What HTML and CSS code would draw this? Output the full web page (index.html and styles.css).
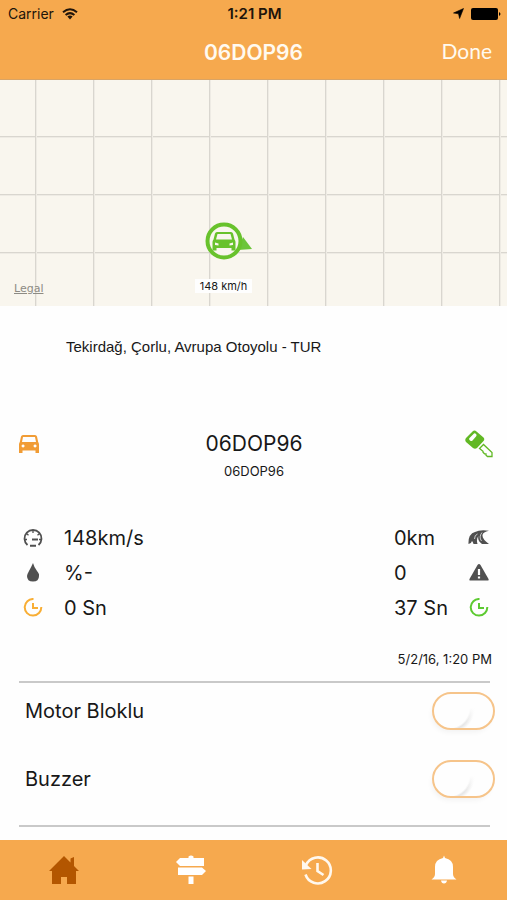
FILE: index.html
```html
<!DOCTYPE html>
<html lang="tr">
<head>
<meta charset="utf-8">
<meta name="viewport" content="width=device-width, initial-scale=1">
<title>06DOP96</title>
<link rel="stylesheet" href="styles.css">
</head>
<body>
<div class="app">
  <header class="header">
    <div class="status">
      <div class="carrier">Carrier
        <svg width="16" height="12" viewBox="0 0 16 12" fill="none" stroke="#20140a" stroke-width="2"><path d="M1 4.2Q8-1.8 15 4.2M3.6 7Q8 3.2 12.4 7"/><path d="M5.4 8.6Q8 6.6 10.6 8.6L8 11.6Z" fill="#20140a" stroke="none"/></svg>
      </div>
      <div class="clock">1:21 PM</div>
      <div class="power">
        <svg width="11" height="11" viewBox="0 0 11 11"><path d="M10.500.5 6.600 10.500 5.500 5.800.5 5Z" fill="#000" stroke="#000" stroke-width=".6"/></svg>
        <svg width="30" height="12" viewBox="0 0 30 12"><rect width="27" height="12" rx="2"/><path d="M28 4q3 2 0 4z"/></svg>
      </div>
    </div>
    <div class="nav">
      <h1 class="nav-title">06DOP96</h1>
      <button class="done" type="button">Done</button>
    </div>
  </header>

  <section class="map" aria-label="Map">
    <a class="legal" href="#legal">Legal</a>
    <div class="marker">
      <svg width="50" height="40" viewBox="0 0 50 40">
        <path d="M39 16 48 28 34 29Z" fill="#6cc53a"/>
        <circle cx="20" cy="20" r="16.500" fill="#f9f6ee" stroke="#68c22c" stroke-width="4"/>
        <path transform="translate(-1)" fill="#68c22c" fill-rule="evenodd" d="M14 11h14q1.500 0 2 1.500l1.500 6q1 1 1 2.500v8.500h-4V27h-15v2.500h-4V21q0-1.500 1-2.500l1.500-6Q12.500 11 14 11zM14.500 13 13 18.500h16L27.500 13zM12 21.500v2.500l3.500.5v-2zM30 21.500v2.500l-3.500.5v-2z"/>
      </svg>
      <span class="speed-tag">148 km/h</span>
    </div>
  </section>

  <main class="details">
    <p class="address">Tekirdağ, Çorlu, Avrupa Otoyolu - TUR</p>

    <section class="vehicle">
      <svg class="car" width="20" height="18" viewBox="0 0 20 18"><path fill="#f19c35" fill-rule="evenodd" d="M4 0h12q1.500 0 2 1.500L19.200 7Q20 8 20 9.500V18h-3.500v-2.500h-13V18H0V9.500Q0 8 .8 7L2 1.500Q2.500 0 4 0zM4 2 3 7h14l-1-5zM4 9.500a1.500 1.500 0 1 0 .1 0zM16 9.500a1.500 1.500 0 1 0 .1 0z"/></svg>
      <div class="names">
        <h2 class="plate">06DOP96</h2>
        <p class="alias">06DOP96</p>
      </div>
      <svg class="key" width="28" height="28" viewBox="0 0 28 28"><path fill="#61b824" fill-rule="evenodd" d="M7.500 1.500q2-2 4 0l7 6q1.500 1.500 0 3.500l-6.500 7q-2 1.500-4 0l-7-6q-1.500-2 0-4zM9 3.500 4.500 8q-1 1.500.5 2.500t2.500 0L11 6.500Q12 5 11 4t-2-.5z"/><path d="M14.500 18.500 18.500 14.500 27 22.500V26.500H22.500L21 25.200V23.800H19.500L18 22.300V21.200Z" fill="#fff" stroke="#61b824" stroke-width="1.300"/></svg>
    </section>

    <section class="stats">
      <svg width="20" height="18" viewBox="0 0 20 18" fill="none" stroke="#505050" stroke-width="2"><path d="M4.500 16A8.500 8.500 0 1 1 15.500 16" stroke-width="1.800"/><path d="M10 1v3M3.500 4.500l2 1.800M16.500 4.500l-2 1.800M1 10.500h3M19 10.500h-3" stroke-width="1.300"/><path d="M9 10.500h6M7 16.700h6"/></svg>
      <span class="value">148km/s</span>
      <span class="value">0km</span>
      <svg width="22" height="16" viewBox="0 0 22 16"><path fill="#505050" d="M.5 14Q0 4 7 2 12-.5 21 .8 15 2 14.500 5q-.5 4 6.500 9H14Q9 10.500 10.500 6 8 9 9.500 14H5.500Q5 12 4 11 3.500 13.500.5 14Z"/><path d="M6.500 9q0-4 3-5M14 2.500Q10.500 7 13.500 11" fill="none" stroke="#fff" stroke-width=".7"/></svg>

      <svg width="12" height="19" viewBox="0 0 12 19"><path fill="#505050" d="M6 0Q7 4 10 8t2 5q0 5.500-6 5.500T0 13q0-1.500 2-5T6 0z"/></svg>
      <span class="value">%-</span>
      <span class="value">0</span>
      <svg width="20" height="17" viewBox="0 0 20 17"><path fill="#505050" d="M8.500 1q1.500-2 3 0l8 14q.5 1.500-1 1.500h-17q-1.500 0-1-1.500z"/><path d="M10 5v6M10 12.500v2" stroke="#fff" stroke-width="2.200"/></svg>

      <svg width="20" height="19" viewBox="0 0 20 19" fill="none" stroke="#f8ae35" stroke-width="2"><path d="M10.500 1A8.300 8.300 0 1 0 18.300 9M10 5v5h5"/></svg>
      <span class="value">0 Sn</span>
      <span class="value">37 Sn</span>
      <svg width="20" height="19" viewBox="0 0 20 19" fill="none" stroke="#5dca31" stroke-width="2"><path d="M10.500 1A8.300 8.300 0 1 0 18.300 9M10 5v5h5"/></svg>
    </section>

    <time class="date">5/2/16, 1:20 PM</time>

    <section class="switches">
      <div class="switch-row">
        <label for="motor">Motor Bloklu</label>
        <input class="switch" id="motor" type="checkbox" role="switch">
      </div>
      <div class="switch-row">
        <label for="buzzer">Buzzer</label>
        <input class="switch" id="buzzer" type="checkbox" role="switch">
      </div>
    </section>
  </main>

  <nav class="tabs">
    <a href="#home" aria-label="Home"><svg width="30" height="30" viewBox="0 0 30 30"><path fill="#b35600" d="M15 1 21.500 7.500V3.500L25 2V11L30 16H27V29H18V22H12V29H3V16H0Z"/></svg></a>
    <a href="#routes" aria-label="Routes"><svg width="30" height="30" viewBox="0 0 30 30"><path fill="#fff" d="M12.500 3V1.500q2.500-2 5 0V3H28v8H4L0 7l4-4zM2 12.500h24l4 3.500-4 4H2zM12.500 21.500h5V29h-5z"/></svg></a>
    <a href="#history" aria-label="History"><svg width="32" height="30" viewBox="0 0 32 30" fill="none" stroke="#fff8ee" stroke-width="2.600"><path d="M5 10A13 13 0 1 1 4.500 19.500M16.500 8v8l6 4"/><path d="M1 5 1 14.500 10.500 14Z" fill="#fff8ee" stroke="none"/></svg></a>
    <a href="#alerts" aria-label="Alerts"><svg width="26" height="30" viewBox="0 0 26 30"><path fill="#fff" d="M12 3 13 .5 14 3Q22 4.500 22 12v7q0 3 3.500 5.500H.5Q4 22 4 19v-7Q4 4.500 12 3zM10 25.500h6q-.5 3-3 3t-3-3z"/></svg></a>
  </nav>
</div>
</body>
</html>
```
FILE: styles.css
```css
* { box-sizing: border-box; }

body {
  margin: 0;
  background: #fefefe;
  color: #181818;
  font-family: Inter, "Liberation Sans", sans-serif;
}

h1, h2, p { margin: 0; font-weight: 400; }
svg { display: block; }

.app {
  display: flex;
  flex-direction: column;
  min-height: 100vh;
}

/* Header */
.header {
  background: #f6a94e;
  border-bottom: 1px solid #d9a465;
}

.status {
  display: grid;
  grid-template-columns: 1fr auto 1fr;
  align-items: center;
  height: 27px;
  padding: 0 6px 0 8px;
  color: #20140a;
  font-size: 14px;
}

.carrier { display: flex; align-items: center; gap: 8px; }
.clock { font-size: 15px; font-weight: 600; line-height: 18px; }

.power {
  display: flex;
  align-items: center;
  justify-content: flex-end;
  gap: 7px;
}

.nav {
  display: grid;
  grid-template-columns: 1fr auto 1fr;
  align-items: center;
  height: 52px;
  padding: 0 15px;
  color: #fffaf0;
}

.nav-title {
  grid-column: 2;
  font-size: 21px;
  font-weight: 600;
  line-height: 24px;
}

.done {
  justify-self: end;
  padding: 0 0 4px;
  border: 0;
  background: none;
  color: inherit;
  font: 21px/24px Lato, sans-serif;
}

/* Map */
.map {
  display: grid;
  grid-template-columns: 1fr auto 1fr;
  align-items: end;
  height: 226px;
  padding: 0 14px 10px;
  background-color: #f9f6ee;
  background-image:
    linear-gradient(90deg, #d9d6cf 1px, #eeebe4 1px, #eeebe4 2px, transparent 2px),
    linear-gradient(#d9d6cf 1px, #eeebe4 1px, #eeebe4 2px, transparent 2px);
  background-size: 58px 58px;
  background-position: 35px 56px;
}

.legal {
  color: #8d8b84;
  font: 11px/14px "DejaVu Sans", sans-serif;
  justify-self: start;
}

.marker {
  display: flex;
  flex-direction: column;
  align-items: center;
  gap: 18px;
  margin: 0 60px 3px 0;
}

.marker svg { margin-left: 10px; }

.speed-tag {
  padding: 0 5px;
  background: #fefefe;
  font-size: 11px;
  line-height: 14px;
}

/* Details */
.details { display: flex; flex-direction: column; }

.address {
  padding: 32px 66px 0;
  font: 15px/18px "Liberation Sans", sans-serif;
}

.vehicle {
  display: grid;
  grid-template-columns: 24px 1fr 28px;
  align-items: start;
  margin-top: 74px;
  padding: 0 14px 0 19px;
  text-align: center;
}

.car { margin-top: 5px; }
.plate { font-size: 21px; line-height: 28px; }
.alias { margin-top: 4px; font-size: 13px; line-height: 18px; }

.stats {
  display: grid;
  grid-template-columns: 20px 1fr 53px 22px;
  grid-auto-rows: 35px;
  align-items: center;
  justify-items: center;
  column-gap: 21px;
  margin-top: 40px;
  padding: 0 17px 0 23px;
}

.value {
  justify-self: start;
  font-size: 20px;
  line-height: 24px;
  white-space: nowrap;
}

.date {
  align-self: flex-end;
  margin: 25px 15px 13px;
  font-size: 13px;
  line-height: 18px;
}

.switches {
  display: grid;
  gap: 30px;
  margin: 0 17px 13px 19px;
  padding: 9px 0 27px;
  border: solid #c9c9c9;
  border-width: 2px 0;
}

.switch-row {
  display: flex;
  align-items: center;
  justify-content: space-between;
  margin-right: -5px;
  padding-left: 6px;
  font-size: 20px;
}

.switch {
  appearance: none;
  width: 63px;
  height: 38px;
  margin: 0;
  border: 2px solid #f6c48a;
  border-radius: 19px;
  background:
    linear-gradient(#fefefe 40%, transparent 90%),
    radial-gradient(circle at 15px 14px, #fefefe 20px, #e6e6e6 22px, #fefefe 26px);
  box-shadow: -2px 4px 6px -3px #eeeeee;
}

.switch:checked { background: #f6a94e; }

/* Tab bar */
.tabs {
  display: grid;
  grid-template-columns: repeat(4, 1fr);
  place-items: center;
  height: 60px;
  margin-top: auto;
  padding-left: 1px;
  background: #f6a94e;
}
```
